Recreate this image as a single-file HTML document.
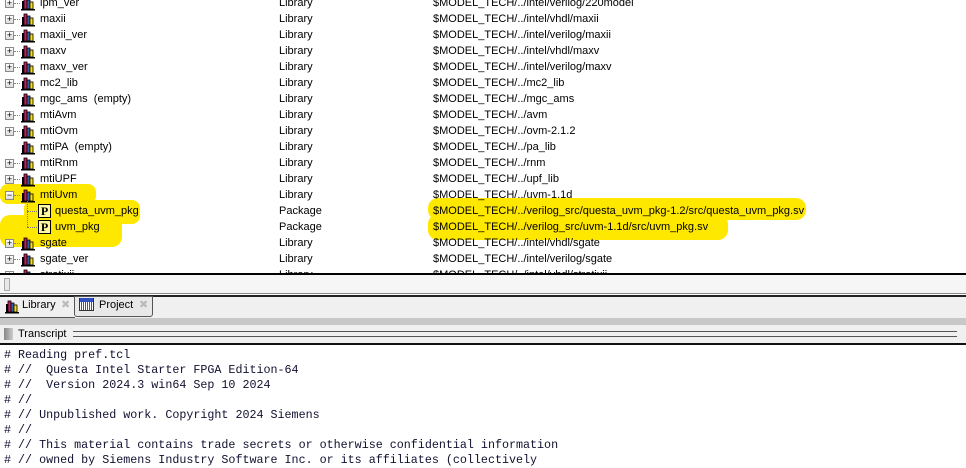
<!DOCTYPE html>
<html><head><meta charset="utf-8"><style>
*{margin:0;padding:0;box-sizing:border-box}
body{width:966px;height:457px;overflow:hidden;background:#fff;position:relative;font-family:"Liberation Sans",Tahoma,sans-serif;font-size:11px;color:#000}
.tree{position:absolute;left:0;top:0;width:966px;height:274px;overflow:hidden;background:#fff}
.r{position:absolute;left:0;height:16px;width:966px;line-height:16px;white-space:nowrap}
.r .n{position:absolute;left:40px}
.r .t{position:absolute;left:279px}
.r .p{position:absolute;left:433px}
.pl{position:absolute;left:5px;top:4px;width:9px;height:9px;border:1px solid #8a8a8a;background:linear-gradient(#fff,#ddd);font-size:9px;line-height:7px;text-align:center;color:#000}
.dash{position:absolute;left:14px;top:8px;width:6px;border-top:1px dotted #888}
.ic{position:absolute;left:20px;top:0}
.hl{position:absolute;background:#ffe800;border-radius:8px}
.mono{font-family:"Liberation Mono","Courier New",monospace;font-size:11.7px;line-height:15px;color:#101030;white-space:pre;position:absolute;left:4px;top:348px}
</style></head><body>
<div class="tree">
<div class="hl" style="left:0;top:184px;width:96px;height:20px"></div>
<div class="hl" style="left:24px;top:200px;width:116px;height:24px"></div>
<div class="hl" style="left:0;top:215px;width:122px;height:32px;border-radius:10px"></div>
<div class="hl" style="left:428px;top:198px;width:378px;height:22px;border-radius:10px"></div>
<div class="hl" style="left:428px;top:214px;width:300px;height:26px;border-radius:10px"></div>
<svg width="0" height="0" style="position:absolute"><defs><g id="lib"><rect x="1" y="14" width="14" height="1.5" fill="#000"/><rect x="2" y="6" width="2" height="8" fill="#000"/><rect x="4" y="3" width="3" height="11" fill="#c0205a" stroke="#000" stroke-width="0.8"/><rect x="7" y="5" width="3" height="9" fill="#3060b0" stroke="#000" stroke-width="0.8"/><rect x="10" y="7" width="3" height="7" fill="#ffe000" stroke="#000" stroke-width="0.8"/></g></defs></svg>
<div id="rows"></div>
</div>
<div style="position:absolute;left:0;top:273px;width:966px;height:2px;background:#000"></div>
<div style="position:absolute;left:0;top:275px;width:966px;height:19px;background:#f6f6f6"></div>
<div style="position:absolute;left:4px;top:278px;width:6px;height:13px;border:1px solid #aaa;background:#e8e8e8"></div>
<div style="position:absolute;left:0;top:293px;width:966px;height:1px;background:#888"></div>
<div style="position:absolute;left:0;top:295px;width:966px;height:2px;background:#222"></div>
<div style="position:absolute;left:0;top:297px;width:966px;height:21px;background:#f0f0f0"></div>
<div style="position:absolute;left:0;top:297px;width:75px;height:21px;border-bottom:1px solid #555;line-height:17px">
<svg style="position:absolute;left:4px;top:1px" width="16" height="16"><use href="#lib"/></svg>
<span style="position:absolute;left:22px;top:0">Library</span><span style="position:absolute;left:61px;top:0;color:#bbb">✖</span></div>
<div style="position:absolute;left:74px;top:296px;width:79px;height:21px;border:1px solid #555;border-radius:0 0 3px 3px;background:#e8e8e8;line-height:16px">
<div style="position:absolute;left:4px;top:1px;width:15px;height:13px;border:1px solid #333;background:repeating-linear-gradient(90deg,#fff 0 1px,#555 1px 2px)"></div>
<div style="position:absolute;left:5px;top:1px;width:13px;height:4px;background:#3050c0"></div>
<span style="position:absolute;left:24px;top:0">Project</span><span style="position:absolute;left:64px;top:0;color:#bbb">✖</span></div>
<div style="position:absolute;left:0;top:318px;width:966px;height:7px;background:#c8c8c8"></div>
<div style="position:absolute;left:0;top:325px;width:966px;height:18px;background:#f0f0f0"></div>
<div style="position:absolute;left:4px;top:328px;width:9px;height:12px;background:linear-gradient(90deg,#888,#ccc)"></div>
<span style="position:absolute;left:18px;top:328px">Transcript</span>
<div style="position:absolute;left:73px;top:331px;width:884px;height:6px;border-top:1px solid #555;border-bottom:1px solid #555"></div>
<div style="position:absolute;left:0;top:343px;width:966px;height:2px;background:#111"></div>
<div class="mono"># Reading pref.tcl
# //  Questa Intel Starter FPGA Edition-64
# //  Version 2024.3 win64 Sep 10 2024
# //
# // Unpublished work. Copyright 2024 Siemens
# //
# // This material contains trade secrets or otherwise confidential information
# // owned by Siemens Industry Software Inc. or its affiliates (collectively</div>
<script>
var d=[["lpm_ver","Library","$MODEL_TECH/../intel/verilog/220model",1],
["maxii","Library","$MODEL_TECH/../intel/vhdl/maxii",1],
["maxii_ver","Library","$MODEL_TECH/../intel/verilog/maxii",1],
["maxv","Library","$MODEL_TECH/../intel/vhdl/maxv",1],
["maxv_ver","Library","$MODEL_TECH/../intel/verilog/maxv",1],
["mc2_lib","Library","$MODEL_TECH/../mc2_lib",1],
["mgc_ams&nbsp; (empty)","Library","$MODEL_TECH/../mgc_ams",0],
["mtiAvm","Library","$MODEL_TECH/../avm",1],
["mtiOvm","Library","$MODEL_TECH/../ovm-2.1.2",1],
["mtiPA&nbsp; (empty)","Library","$MODEL_TECH/../pa_lib",0],
["mtiRnm","Library","$MODEL_TECH/../rnm",1],
["mtiUPF","Library","$MODEL_TECH/../upf_lib",1],
["mtiUvm","Library","$MODEL_TECH/../uvm-1.1d",2],
["questa_uvm_pkg","Package","$MODEL_TECH/../verilog_src/questa_uvm_pkg-1.2/src/questa_uvm_pkg.sv",3],
["uvm_pkg","Package","$MODEL_TECH/../verilog_src/uvm-1.1d/src/uvm_pkg.sv",3],
["sgate","Library","$MODEL_TECH/../intel/vhdl/sgate",1],
["sgate_ver","Library","$MODEL_TECH/../intel/verilog/sgate",1],
["stratixii","Library","$MODEL_TECH/../intel/vhdl/stratixii",1]];
var h="";
d.forEach(function(r,i){
var top=-5+16*i;h+='<div class="r" style="top:'+top+'px">';
if(r[3]==1||r[3]==2){h+='<div class="pl">'+(r[3]==1?'+':'&minus;')+'</div><div class="dash"></div>';}
if(r[3]==3){h+='<div style="position:absolute;left:27px;top:'+(i==13?-2:-8)+'px;height:'+(i==13?10:16)+'px;border-left:1px dotted #777"></div><div style="position:absolute;left:27px;top:8px;width:10px;border-top:1px dotted #777"></div><div style="position:absolute;left:38px;top:1px;width:13px;height:14px;border:1px solid #000;background:#fff8a0;font:bold 12px \'Liberation Serif\',serif;line-height:12px;text-align:center">P</div><span class="n" style="left:55px">'+r[0]+'</span>';}
else{h+='<svg class="ic" width="16" height="16"><use href="#lib"/></svg><span class="n">'+r[0]+'</span>';}
h+='<span class="t">'+r[1]+'</span><span class="p">'+r[2]+'</span></div>';});
document.getElementById("rows").innerHTML=h;
</script>
</body></html>
